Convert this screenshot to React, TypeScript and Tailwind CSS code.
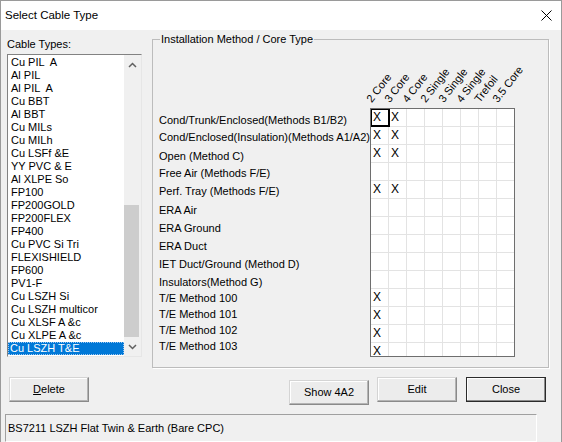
import React from 'react';

const cableTypes = [
  'Cu PIL  A', 'Al PIL', 'Al PIL  A', 'Cu BBT', 'Al BBT', 'Cu MILs', 'Cu MILh', 'Cu LSFf &E',
  'YY PVC & E', 'Al XLPE So', 'FP100', 'FP200GOLD', 'FP200FLEX', 'FP400', 'Cu PVC Si Tri',
  'FLEXISHIELD', 'FP600', 'PV1-F', 'Cu LSZH Si', 'Cu LSZH multicor', 'Cu XLSF A &c',
  'Cu XLPE A &c', 'Cu LSZH T&E',
];

// labels sit at slightly uneven offsets in the original form
const methods = [
  { label: 'Cond/Trunk/Enclosed(Methods B1/B2)', h: 'h-[17px]' },
  { label: 'Cond/Enclosed(Insulation)(Methods A1/A2)', h: 'h-[19px]' },
  { label: 'Open (Method C)', h: 'h-[17px]' },
  { label: 'Free Air (Methods F/E)', h: 'h-[18px]' },
  { label: 'Perf. Tray (Methods F/E)', h: 'h-[19px]' },
  { label: 'ERA Air', h: 'h-[18px]' },
  { label: 'ERA Ground', h: 'h-[18px]' },
  { label: 'ERA Duct', h: 'h-[18px]' },
  { label: 'IET Duct/Ground (Method D)', h: 'h-[18px]' },
  { label: 'Insulators(Method G)', h: 'h-[16px]' },
  { label: 'T/E Method 100', h: 'h-[16px]' },
  { label: 'T/E Method 101', h: 'h-[16px]' },
  { label: 'T/E Method 102', h: 'h-[16px]' },
  { label: 'T/E Method 103', h: 'h-[13px]' },
];

const cores = ['2 Core', '3 Core', '4 Core', '2 Single', '3 Single', '4 Single', 'Trefoil', '3.5 Core'];

const marks: number[][] = [[0, 1], [0, 1], [0, 1], [], [0, 1], [], [], [], [], [], [0], [0], [0], [0]];

function Chevron({ down }: { down?: boolean }) {
  return (
    <svg width="9" height="6" viewBox="0 0 9 6">
      <polyline
        points={down ? '1,1 4.5,4.5 8,1' : '1,5 4.5,1.5 8,5'}
        fill="none"
        stroke="#606060"
        strokeWidth="1.5"
      />
    </svg>
  );
}

function Btn({ children, isDefault, className = '' }: { children: React.ReactNode; isDefault?: boolean; className?: string }) {
  return (
    <div
      className={
        'w-[80px] h-[25px] flex items-center justify-center bg-[#ececec] text-black ' +
        (isDefault
          ? 'border border-[#2b2b2b] shadow-[inset_-1px_-1px_0_#8c8c8c,inset_1px_1px_0_#ffffff] '
          : 'border border-t-[#d4d4d4] border-l-[#d4d4d4] border-r-[#8a8a8a] border-b-[#8a8a8a] shadow-[inset_-1px_-1px_0_#b4b4b4,inset_1px_1px_0_#ffffff] ') +
        className
      }
    >
      {children}
    </div>
  );
}

export default function App() {
  return (
    <div className="w-[562px] h-[442px] overflow-hidden bg-[#f0f0f0] border-l border-r border-t border-[#9a9a9a] flex flex-col font-['Liberation_Sans',Arial,sans-serif] text-[11px] leading-[13px] text-black">
      {/* title bar */}
      <div className="h-[29px] shrink-0 bg-white flex items-center justify-between pl-[4px] pr-[9px]">
        <span className="text-[11.5px]">Select Cable Type</span>
        <svg width="11" height="11" viewBox="0 0 11 11">
          <line x1="0.5" y1="0.5" x2="10.5" y2="10.5" stroke="#000" strokeWidth="1" />
          <line x1="10.5" y1="0.5" x2="0.5" y2="10.5" stroke="#000" strokeWidth="1" />
        </svg>
      </div>

      <div className="flex items-start">
        {/* cable types list */}
        <div className="ml-[6px] mt-[8px] flex flex-col">
          <span>Cable Types:</span>
          <div className="mt-[3px] w-[135px] h-[303px] flex border border-t-[#828282] border-l-[#828282] border-r-[#e6e6e6] border-b-[#e6e6e6] bg-white">
            <div className="w-[116px] pt-[1px] flex flex-col">
              {cableTypes.map((c, i) =>
                i === cableTypes.length - 1 ? (
                  <div key={c} className="h-[13px] pl-[2px] whitespace-pre bg-[#0078d7] text-white outline outline-1 outline-dotted outline-offset-[-1px] outline-[#9ec7f0]">
                    {c}
                  </div>
                ) : (
                  <div key={c} className="h-[13px] pl-[3px] whitespace-pre">
                    {c}
                  </div>
                )
              )}
            </div>
            <div className="w-[17px] bg-[#f0f0f0] flex flex-col">
              <div className="h-[17px] flex items-center justify-center pt-[2px]">
                <Chevron />
              </div>
              <div className="flex-1">
                <div className="mt-[133px] w-[15px] h-[132px] bg-[#cdcdcd]" />
              </div>
              <div className="h-[17px] flex items-center justify-center pb-[2px]">
                <Chevron down />
              </div>
            </div>
          </div>
        </div>

        {/* installation method group */}
        <div className="ml-[10px] mt-[9px] w-[397px] h-[329px] relative border border-[#bcbcbc] shadow-[1px_1px_0_#ffffff]">
          <span className="absolute -top-[7px] left-[7px] bg-[#f0f0f0] px-[1px]">Installation Method / Core Type</span>
          <div className="flex">
            <div className="ml-[6px] mt-[74px] w-[211px] flex flex-col">
              {methods.map(m => (
                <div key={m.label} className={m.h + ' whitespace-nowrap'}>
                  {m.label}
                </div>
              ))}
            </div>
            <div className="flex flex-col">
              <div className="h-[68px] flex items-end">
                {cores.map(c => (
                  <div key={c} className="w-[18px] h-full flex items-end">
                    <span className="ml-[4px] mb-[3px] whitespace-nowrap origin-bottom-left -rotate-[52deg] leading-[13px]">
                      {c}
                    </span>
                  </div>
                ))}
              </div>
              <div className="w-[145px] h-[249px] border border-[#6e6e6e] bg-white overflow-hidden">
                {marks.map((row, r) => (
                  <div key={r} className="flex h-[18px] border-b border-[#e3e3e3]">
                    {cores.map((_, c) => (
                      <div
                        key={c}
                        className={
                          'relative h-[17px] pl-[2px] text-[12px] leading-[17px] ' +
                          (c === 7 ? 'w-[17px]' : 'w-[18px] border-r border-[#e3e3e3]')
                        }
                      >
                        {row.includes(c) ? 'X' : ''}
                        {r === 0 && c === 0 && (
                          <div className="absolute -left-[1px] -top-[1px] w-[20px] h-[19px] border-2 border-black" />
                        )}
                      </div>
                    ))}
                  </div>
                ))}
              </div>
            </div>
          </div>
        </div>
      </div>

      {/* buttons */}
      <div className="mt-[9px] flex items-start">
        <Btn className="ml-[8px]">
          <span>
            <span className="underline">D</span>elete
          </span>
        </Btn>
        <Btn className="ml-[200px] mt-[3px]">Show 4A2</Btn>
        <Btn className="ml-[8px]">Edit</Btn>
        <Btn className="ml-[9px]" isDefault>
          Close
        </Btn>
      </div>

      {/* status panel */}
      <div className="mt-[9px] ml-[4px] w-[532px] h-[28px] shrink-0 border border-t-[#a0a0a0] border-l-[#a0a0a0] border-r-white border-b-white pt-[7px] pl-[2px]">
        BS7211 LSZH Flat Twin &amp; Earth (Bare CPC)
      </div>
    </div>
  );
}
